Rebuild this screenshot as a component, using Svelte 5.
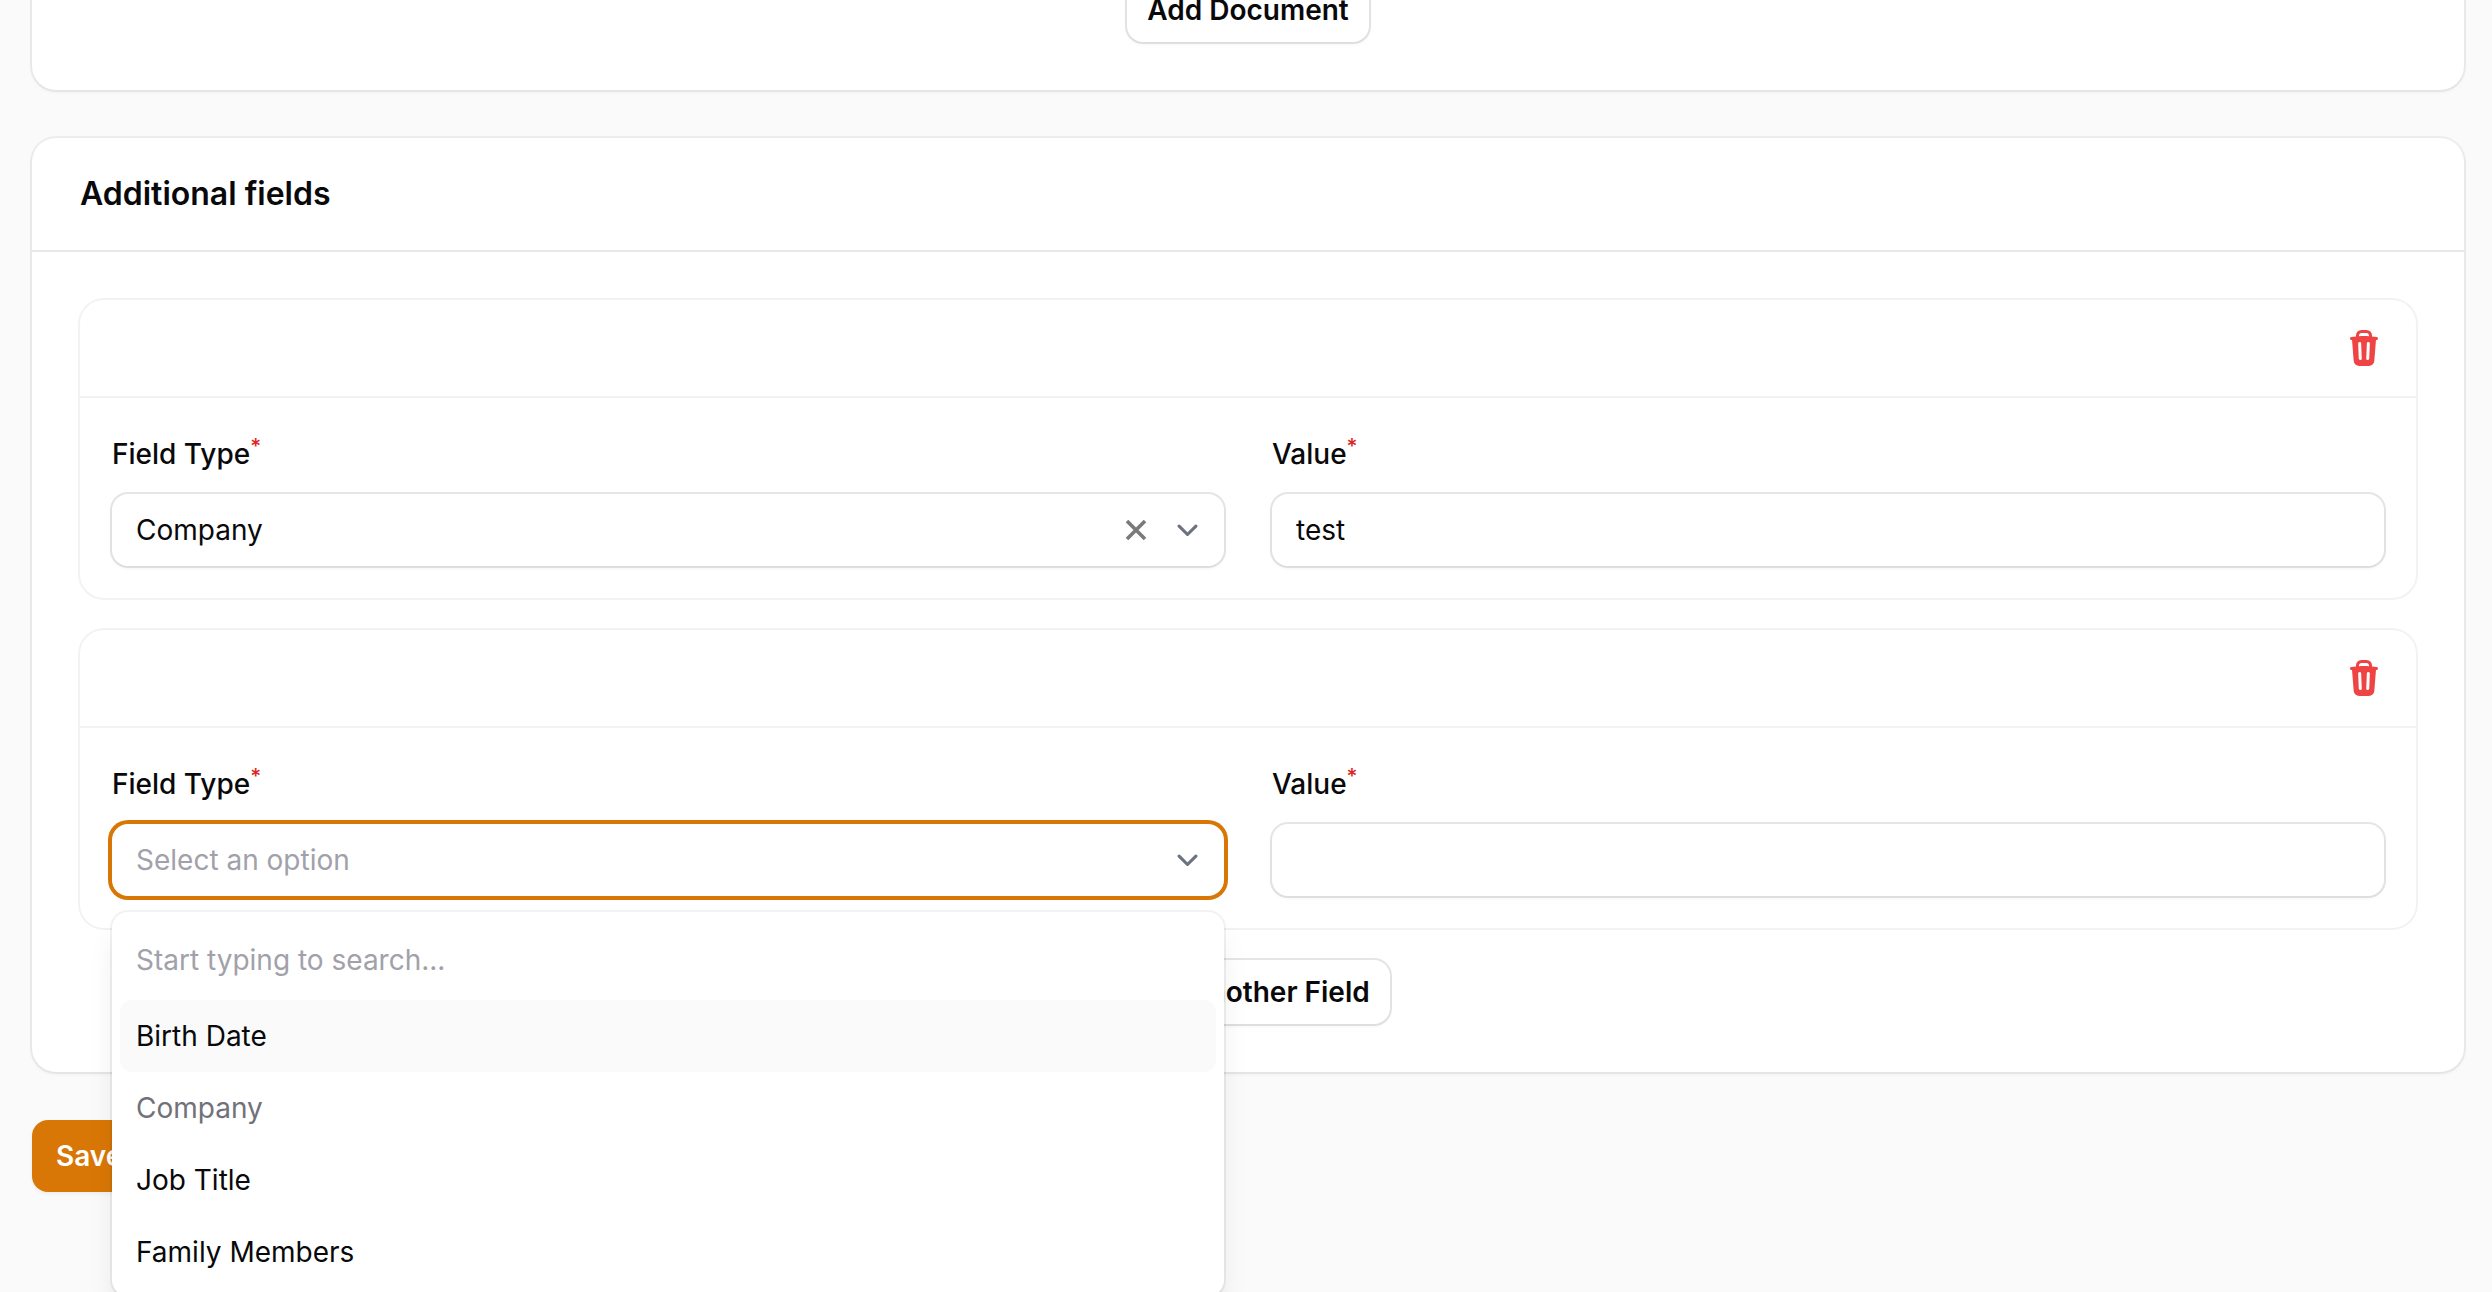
<script>
  const rows = [
    { type: 'Company', value: 'test', open: false },
    { type: '', value: '', open: true }
  ];
  const options = [
    { label: 'Birth Date', active: true },
    { label: 'Company', disabled: true },
    { label: 'Job Title' },
    { label: 'Family Members' }
  ];
</script>

<div class="page">
  <section class="card first">
    <div class="actions">
      <button class="btn">Add Document</button>
    </div>
  </section>

  <section class="card">
    <header class="card-head">
      <h3>Additional fields</h3>
    </header>
    <div class="card-body">
      <div class="rows">
        {#each rows as row}
          <div class="row">
            <div class="row-head">
              <button class="trash" aria-label="Delete">
                <svg viewBox="0 0 20 20" width="40" height="40" fill="currentColor">
                  <path fill-rule="evenodd" clip-rule="evenodd" d="M8.75 1A2.75 2.75 0 0 0 6 3.75v.443c-.795.077-1.584.176-2.365.298a.75.75 0 1 0 .23 1.482l.149-.022.841 10.518A2.75 2.75 0 0 0 7.596 19h4.807a2.75 2.75 0 0 0 2.742-2.53l.841-10.52.149.023a.75.75 0 0 0 .23-1.482A41.03 41.03 0 0 0 14 4.193V3.75A2.75 2.75 0 0 0 11.25 1h-2.5ZM10 4c.84 0 1.673.025 2.5.075V3.75c0-.69-.56-1.25-1.25-1.25h-2.5c-.69 0-1.25.56-1.25 1.25v.325C8.327 4.025 9.16 4 10 4ZM8.58 7.72a.75.75 0 0 0-1.5.06l.3 7.5a.75.75 0 1 0 1.5-.06l-.3-7.5Zm4.34.06a.75.75 0 1 0-1.5-.06l-.3 7.5a.75.75 0 1 0 1.5.06l.3-7.5Z" />
                </svg>
              </button>
            </div>
            <div class="row-body">
              <div class="field">
                <span class="label">Field Type<sup>*</sup></span>
                <div class="select-wrap">
                  <div class="control select" class:focused={row.open}>
                    {#if row.type}
                      <span class="grow">{row.type}</span>
                      <svg class="clear" viewBox="0 0 22 22" width="22" height="22" fill="none" stroke="#7a7a7a" stroke-width="3.6">
                        <path d="M2 2l18 18M20 2L2 20" />
                      </svg>
                    {:else}
                      <span class="grow placeholder">Select an option</span>
                    {/if}
                    <svg class="chevron" viewBox="5 7 10 6" width="21" height="12.6" fill="none" stroke="#6b7280" stroke-width="1.5" stroke-linecap="round" stroke-linejoin="round">
                      <path d="m6 8 4 4 4-4" />
                    </svg>
                  </div>
                  {#if row.open}
                    <div class="dropdown">
                      <div class="search">Start typing to search...</div>
                      <ul>
                        {#each options as opt}
                          <li class:active={opt.active} class:disabled={opt.disabled}>{opt.label}</li>
                        {/each}
                      </ul>
                    </div>
                  {/if}
                </div>
              </div>
              <div class="field">
                <span class="label">Value<sup>*</sup></span>
                <input class="control" value={row.value} />
              </div>
            </div>
          </div>
        {/each}
      </div>
      <div class="actions">
        <button class="btn">Add Another Field</button>
      </div>
    </div>
  </section>

  <div class="footer">
    <button class="btn primary">Save changes</button>
  </div>
</div>

<style>
  :global(body) {
    background: #fafafa;
    overflow: hidden;
  }

  .page {
    height: 1292px;
    overflow: hidden;
    padding: 0 28px 0 32px;
    box-sizing: border-box;
    font-family: Inter, "Liberation Sans", sans-serif;
    font-optical-sizing: none;
    font-size: 28px;
    line-height: 40px;
    color: #09090b;
  }

  .card {
    background: #fff;
    border-radius: 24px;
    box-shadow: 0 0 0 2px rgba(9, 9, 11, 0.05), 0 2px 4px rgba(0, 0, 0, 0.05);
  }

  .first {
    margin-top: -70px;
    margin-bottom: 48px;
    padding: 48px;
  }

  .card-head {
    padding: 32px 48px;
    border-bottom: 2px solid #e7e7e8;
  }

  h3 {
    margin: 0;
    font-size: 32px;
    line-height: 48px;
    font-weight: 600;
  }

  .card-body {
    padding: 48px;
  }

  .rows {
    display: flex;
    flex-direction: column;
    gap: 32px;
  }

  .row {
    border-radius: 24px;
    box-shadow: 0 0 0 2px rgba(9, 9, 11, 0.05);
  }

  .row-head {
    display: flex;
    justify-content: flex-end;
    padding: 28px 32px;
    border-bottom: 2px solid #f2f2f2;
  }

  .trash {
    display: block;
    width: 40px;
    height: 40px;
    padding: 0;
    border: 0;
    background: none;
    color: #ef4444;
  }

  .row-body {
    display: grid;
    grid-template-columns: 1fr 1fr;
    gap: 48px;
    padding: 36px 32px 32px;
  }

  .field {
    display: flex;
    flex-direction: column;
    gap: 20px;
    min-width: 0;
  }

  .label {
    font-weight: 500;
    display: block;
  }

  sup {
    color: #dc2626;
    font-size: 21px;
    font-weight: 500;
    line-height: 0;
  }

  .select-wrap {
    position: relative;
  }

  .control {
    display: flex;
    align-items: center;
    box-sizing: border-box;
    width: 100%;
    height: 72px;
    padding: 0 26px 0 24px;
    border: 0;
    outline: 0;
    border-radius: 16px;
    background: #fff;
    color: inherit;
    font: inherit;
    box-shadow: 0 0 0 2px rgba(9, 9, 11, 0.1), 0 2px 4px rgba(0, 0, 0, 0.05);
  }

  .focused {
    box-shadow: 0 0 0 4px #d97706;
  }

  .grow {
    flex: 1;
  }

  .placeholder,
  .search {
    color: #a1a1aa;
  }

  .clear {
    margin-right: 30px;
  }

  .dropdown {
    position: absolute;
    top: 88px;
    left: 0;
    right: 0;
    z-index: 10;
    background: #fff;
    border-radius: 16px;
    box-shadow: 0 0 0 2px rgba(9, 9, 11, 0.05), 0 20px 30px -6px rgba(0, 0, 0, 0.1), 0 8px 12px -8px rgba(0, 0, 0, 0.1);
  }

  .search {
    padding: 28px 24px 20px;
  }

  ul {
    list-style: none;
    margin: 0;
    padding: 0 8px 8px;
  }

  li {
    padding: 16px;
    border-radius: 12px;
  }

  li.active {
    background: #fafafa;
  }

  li.disabled {
    color: #71717a;
  }

  .actions {
    display: flex;
    justify-content: center;
    margin-top: 32px;
  }

  .first .actions {
    margin-top: 0;
  }

  .btn {
    height: 64px;
    padding: 0 20px;
    border: 0;
    border-radius: 16px;
    background: #fff;
    color: #09090b;
    font: inherit;
    font-weight: 600;
    box-shadow: 0 0 0 2px rgba(9, 9, 11, 0.1), 0 2px 4px rgba(0, 0, 0, 0.05);
  }

  .footer {
    margin-top: 48px;
  }

  .primary {
    height: 72px;
    padding: 0 24px;
    background: #d97706;
    color: #fff;
    box-shadow: 0 2px 4px rgba(0, 0, 0, 0.05);
  }
</style>
